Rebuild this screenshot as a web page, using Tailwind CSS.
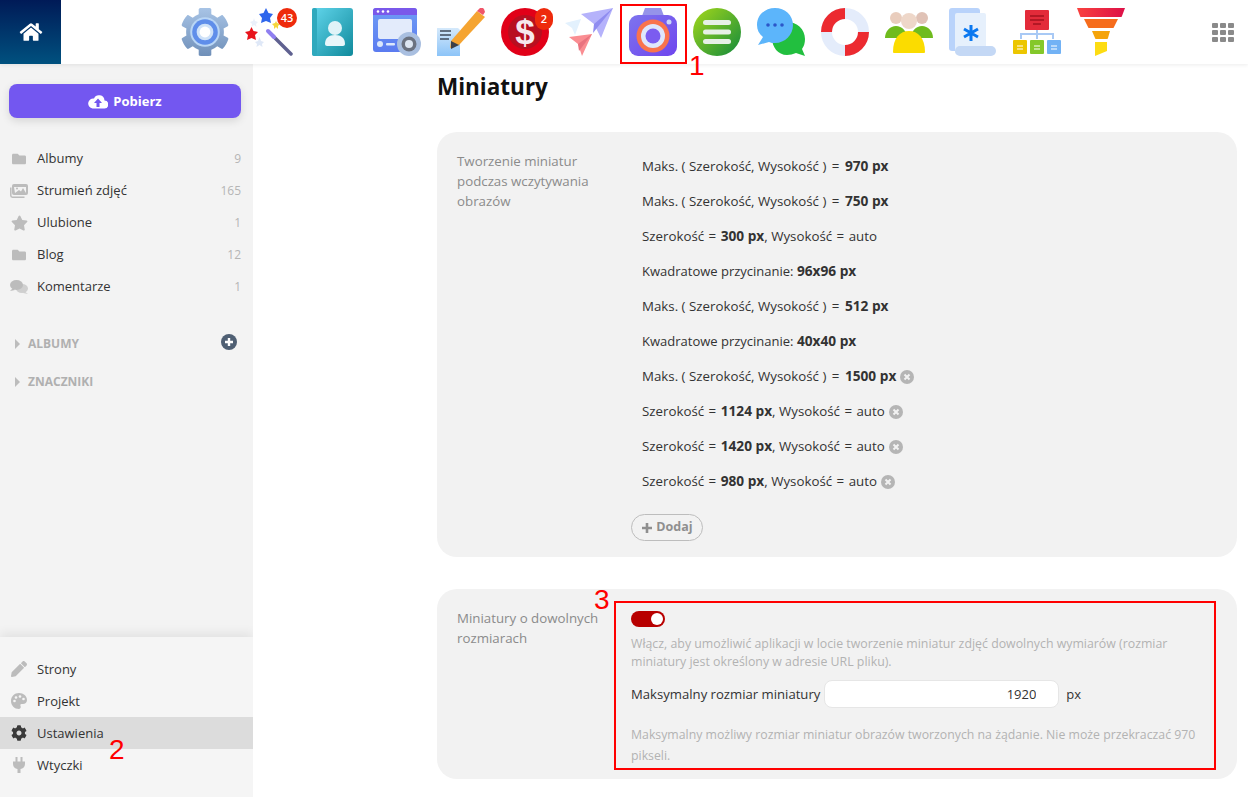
<!DOCTYPE html>
<html lang="pl">
<head>
    <meta charset="UTF-8">
    <title>Miniatury</title>
    <script src="https://cdn.jsdelivr.net/npm/@tailwindcss/browser@4"></script>
</head>
<body class="relative h-[797px] w-[1248px] overflow-hidden bg-white font-['Open_Sans',sans-serif] text-[13px] text-[#333]">

    <!-- top bar -->
    <header class="relative z-20 flex h-16 items-center bg-white shadow-[0_1px_4px_rgba(0,0,0,0.08)]">
        <a class="flex h-16 w-[61px] items-center justify-center bg-gradient-to-b from-[#001a57] to-[#00517f]">
            <svg class="h-[20px] w-[24px] fill-white" viewBox="0 0 576 512"><path d="M280.37 148.26L96 300.11V464a16 16 0 0 0 16 16l112.06-.29a16 16 0 0 0 15.92-16V368a16 16 0 0 1 16-16h64a16 16 0 0 1 16 16v95.64a16 16 0 0 0 16 16.05L464 480a16 16 0 0 0 16-16V300L295.67 148.26a12.19 12.19 0 0 0-15.3 0zM571.6 251.47L488 182.56V44.05a12 12 0 0 0-12-12h-56a12 12 0 0 0-12 12v72.61L318.47 43a48 48 0 0 0-61 0L4.34 251.47a12 12 0 0 0-1.6 16.9l25.5 31A12 12 0 0 0 45.15 301l235.22-193.74a12.19 12.19 0 0 1 15.3 0L530.9 301a12 12 0 0 0 16.9-1.6l25.5-31a12 12 0 0 0-1.7-16.93z"/></svg>
        </a>
        <nav class="ml-[120px] flex gap-4">
            <!-- settings -->
            <svg class="h-12 w-12" viewBox="16 12 480 488"><defs><linearGradient id="g1" x1="0" y1="0" x2="0" y2="1"><stop offset="0" stop-color="#a8c4e6"/><stop offset="1" stop-color="#6f8fb8"/></linearGradient></defs><path fill="url(#g1)" d="M487.4 315.7l-42.6-24.6c4.3-23.2 4.3-47 0-70.2l42.6-24.6c4.9-2.8 7.1-8.6 5.5-14-11.1-35.6-30-67.8-54.7-94.6-3.8-4.1-10-5.1-14.8-2.3L380.8 110c-17.9-15.4-38.5-27.3-60.8-35.1V25.8c0-5.6-3.9-10.5-9.4-11.7-36.7-8.2-74.3-7.8-109.2 0-5.5 1.2-9.4 6.1-9.4 11.7V75c-22.2 7.9-42.8 19.8-60.8 35.1L88.7 85.5c-4.9-2.8-11-1.9-14.8 2.3-24.7 26.7-43.6 58.9-54.7 94.6-1.7 5.4.6 11.2 5.5 14L67.3 221c-4.3 23.2-4.3 47 0 70.2l-42.6 24.6c-4.9 2.8-7.1 8.6-5.5 14 11.1 35.6 30 67.8 54.7 94.6 3.8 4.1 10 5.1 14.8 2.3l42.6-24.6c17.9 15.4 38.5 27.3 60.8 35.1v49.2c0 5.6 3.9 10.5 9.4 11.7 36.7 8.2 74.3 7.8 109.2 0 5.5-1.2 9.4-6.1 9.4-11.7v-49.2c22.2-7.9 42.8-19.8 60.8-35.1l42.6 24.6c4.9 2.8 11 1.9 14.8-2.3 24.7-26.7 43.6-58.9 54.7-94.6 1.5-5.5-.7-11.3-5.6-14.1z"/><circle cx="256" cy="256" r="150" fill="#b9d6f5"/><circle cx="256" cy="256" r="130" fill="#5f8eea"/><circle cx="256" cy="256" r="85" fill="#cfe2f8"/><circle cx="256" cy="256" r="55" fill="#fff"/></svg>
            <!-- wand -->
            <div class="relative h-12 w-12">
                <svg class="h-12 w-12" viewBox="0 0 48 48"><path d="M28 28l18 18" stroke="#5f6190" stroke-width="3.500" stroke-linecap="round"/><path d="M23 23l6 6" stroke="#8f7ff0" stroke-width="4" stroke-linecap="round"/><polygon fill="#2f66ec" points="21,0 23.500,5 28,6 25,10 26,15 21,13 16,15 17,10 14,6 18.500,5"/><polygon fill="#e8141c" points="6.500,19 8.500,23 13,24 10,27 11,32 6.500,30 2,32 3,27 0,24 4.500,23"/><polygon fill="#dfe8f7" points="14.500,29 16,33 19,34 17,36 17.500,39 14.500,37 11.500,39 12,36 10,34 13,33"/><polygon fill="#eaf0fa" points="9,10 10,13 13,14 11,16 11.500,19 9,17 6.500,19 7,16 5,14 8,13"/><polygon fill="#f5d63d" points="31,13 32,15 35,16 33,18 33,21 31,19 29,21 29,18 27,16 30,15"/></svg>
                <span class="absolute left-[32px] top-0 flex h-5 w-5 items-center justify-center rounded-full bg-[#ee2a0c] text-[11px] font-semibold text-white">43</span>
            </div>
            <!-- contacts -->
            <svg class="h-12 w-12" viewBox="0 0 48 48"><defs><linearGradient id="g3" x1="0" y1="0" x2="1" y2="1"><stop offset="0" stop-color="#62d6ec"/><stop offset="1" stop-color="#108a9c"/></linearGradient></defs><rect x="3" width="41" height="48" rx="3" fill="url(#g3)"/><rect x="3" width="5" height="48" rx="2" fill="#2fa9bd"/><circle cx="26" cy="20" r="7" fill="#dff3f8"/><path d="M16 36c0-6 4-9 10-9s10 3 10 9c0 1-1 2-2 2H18c-1 0-2-1-2-2z" fill="#e9f6fa"/></svg>
            <!-- browser settings -->
            <svg class="h-12 w-12" viewBox="0 0 48 48"><defs><linearGradient id="g4" x1="0" y1="0" x2="0" y2="1"><stop offset="0" stop-color="#6f9cf5"/><stop offset="1" stop-color="#5b7bf0"/></linearGradient></defs><rect y="0" width="44" height="44" rx="3" fill="url(#g4)"/><path d="M3 0h38a3 3 0 0 1 3 3v4H0V3a3 3 0 0 1 3-3z" fill="#7a58ea"/><circle cx="5" cy="3.500" r="1.300" fill="#fff"/><circle cx="10" cy="3.500" r="1.300" fill="#fff"/><circle cx="15" cy="3.500" r="1.300" fill="#fff"/><rect x="5" y="11" width="34" height="20" rx="2" fill="#e3ebfb"/><circle cx="7" cy="36" r="3" fill="#dbe7fb"/><rect x="13" y="35" width="9" height="2.500" rx="1" fill="#dbe7fb"/><circle cx="36" cy="36" r="12" fill="#a9bfe0"/><circle cx="36" cy="36" r="7.500" fill="#6b7280"/><circle cx="36" cy="36" r="4" fill="#dde6f2"/></svg>
            <!-- note pencil -->
            <svg class="h-12 w-12" viewBox="0 0 48 48"><defs><linearGradient id="g5" x1="0" y1="0" x2="0" y2="1"><stop offset="0" stop-color="#d5e9fb"/><stop offset="1" stop-color="#8cc4f8"/></linearGradient></defs><path d="M0 20h21l2 2v26H0z" fill="url(#g5)"/><path d="M3 23h11M3 27h11M3 31h9" stroke="#3f4a5a" stroke-width="1.600"/><path d="M14 33L40 3l8 6-26 28-9 3z" fill="#f5a431"/><path d="M40 3l3-3c2-1 3 0 4 1l1 3-2 3z" fill="#f0566a"/><path d="M14 33l8 4-8 4z" fill="#3a3f49"/></svg>
            <!-- dollar -->
            <div class="relative h-12 w-12">
                <svg class="h-12 w-12" viewBox="0 0 48 48"><circle cx="24" cy="24" r="24" fill="#e10018"/><circle cx="24" cy="24" r="17" fill="#b80f20"/><text x="24" y="36" text-anchor="middle" font-family="Liberation Sans" font-weight="700" font-size="35" fill="#f6e8ee">$</text></svg>
                <span class="absolute left-[34px] top-0 flex h-[22px] w-[18px] items-center justify-center rounded-full bg-[#ee2a0c] text-[11px] font-semibold text-white">2</span>
            </div>
            <!-- paper planes -->
            <svg class="h-12 w-12" viewBox="0 0 48 48"><polygon fill="#b5b2fb" points="16,6 48,0 36,30 29,16"/><polygon fill="#8f8cf0" points="29,16 48,0 28,25"/><polygon fill="#fa8d92" points="4,29 27,26 17,48 13,36"/><polygon fill="#e9737f" points="13,36 27,26 14,43"/><polygon fill="#e3f1fd" points="0,15 16,11 10,27 7,20"/></svg>
            <!-- camera -->
            <svg class="h-12 w-12" viewBox="0 0 48 48"><defs><linearGradient id="g8" x1="0" y1="0" x2="1" y2="1"><stop offset="0" stop-color="#7d74ee"/><stop offset="1" stop-color="#6f45ee"/></linearGradient></defs><path d="M16 0h16l3 8H13z" fill="#9593ea"/><rect y="7" width="48" height="41" rx="9" fill="url(#g8)"/><circle cx="24" cy="28" r="16.500" fill="#f9734d"/><circle cx="24" cy="28" r="12" fill="#dfe6fb"/><circle cx="24" cy="28" r="7.500" fill="#7b5cf0"/><circle cx="40" cy="14" r="2.500" fill="#c9d6fb"/></svg>
            <!-- menu circle -->
            <svg class="h-12 w-12" viewBox="0 0 48 48"><defs><linearGradient id="g9" x1="0" y1="0" x2="1" y2="1"><stop offset="0" stop-color="#a5d81a"/><stop offset="1" stop-color="#128a3c"/></linearGradient></defs><circle cx="24" cy="24" r="24" fill="url(#g9)"/><rect x="10" y="12" width="28" height="5" rx="2.500" fill="#e6f0e6"/><rect x="10" y="21.500" width="28" height="5" rx="2.500" fill="#e6f0e6"/><rect x="10" y="31" width="28" height="5" rx="2.500" fill="#e6f0e6"/></svg>
            <!-- chat -->
            <svg class="h-12 w-12" viewBox="0 0 48 48"><path d="M30 14c10 0 18 7 18 17 0 4-1 7-3 10l3 7-9-3c-3 1-6 2-9 2-9 0-15-8-15-17s6-16 15-16z" fill="#22bf3f"/><path d="M18 0c10 0 18 7 18 17s-8 18-18 18c-2 0-4 0-6-1l-11 3 5-8C2 26 0 22 0 17 0 7 8 0 18 0z" fill="#5cb5fb"/><circle cx="11" cy="17" r="1.800" fill="#2b57c9"/><circle cx="18" cy="17" r="1.800" fill="#2b57c9"/><circle cx="25" cy="17" r="1.800" fill="#2b57c9"/></svg>
            <!-- lifebuoy -->
            <svg class="h-12 w-12" viewBox="0 0 48 48"><circle cx="24" cy="24" r="18.500" fill="none" stroke="#e4ecfb" stroke-width="11"/><path d="M0 24A24 24 0 0 1 24 0L24 11A13 13 0 0 0 11 24z" fill="#ec2a30"/><path d="M48 24A24 24 0 0 1 24 48L24 37A13 13 0 0 0 37 24z" fill="#ec2a30"/></svg>
            <!-- group -->
            <svg class="h-12 w-12" viewBox="0 0 48 48"><circle cx="11" cy="10" r="6" fill="#e9cdbd"/><circle cx="37" cy="10" r="6" fill="#e0c2b6"/><path d="M0 30c0-7 5-12 11-12s11 5 11 12z" fill="#6fbb1e"/><path d="M26 30c0-7 5-12 11-12s11 5 11 12z" fill="#6fbb1e"/><circle cx="24" cy="13" r="8" fill="#eed7c9"/><path d="M8 44c0-14 7-21 16-21s16 7 16 21c0 1-1 1-2 1H10c-1 0-2 0-2-1z" fill="#fbdc00"/></svg>
            <!-- document asterisk -->
            <svg class="h-12 w-12" viewBox="0 0 48 48"><rect x="0" y="0" width="31" height="43" rx="3" fill="#b9d3fb"/><rect x="6" y="5" width="31" height="41" rx="2" fill="#e6f0fc"/><rect x="6" y="38" width="41" height="10" rx="5" fill="#c4d8f5"/><path d="M22 17v16M15 21l14 8M29 21l-14 8" stroke="#0b78f0" stroke-width="3"/></svg>
            <!-- hierarchy -->
            <svg class="h-12 w-12" viewBox="0 0 48 48"><rect x="12" y="2" width="24" height="20" rx="1" fill="#e32b3a"/><path d="M17 8h14M17 12h14M20 16h8" stroke="#a4131f" stroke-width="1.600"/><path d="M24 22v9M8 31v-5h32v5" fill="none" stroke="#a8c9f5" stroke-width="2"/><rect y="32" width="14" height="14" rx="1" fill="#ecc600"/><rect x="17" y="32" width="14" height="14" rx="1" fill="#84c82a"/><rect x="34" y="32" width="14" height="14" rx="1" fill="#72b2f5"/><path d="M4 38h6M4 41h6M21 38h6M21 41h6M38 38h6M38 41h6" stroke="#fff" stroke-width="1.200"/></svg>
            <!-- funnel -->
            <svg class="h-12 w-12" viewBox="0 0 48 48"><defs><linearGradient id="g15" x1="0" y1="0" x2="1" y2="0"><stop offset="0" stop-color="#f9423e"/><stop offset="1" stop-color="#dd1048"/></linearGradient></defs><path d="M0 0h48l-3 8a1 1 0 0 1-1 1H4a1 1 0 0 1-1-1z" fill="url(#g15)"/><path d="M7 11h34l-4 8a1 1 0 0 1-1 1H12a1 1 0 0 1-1-1z" fill="#f66c1c"/><path d="M15 23h18l-2 7a1 1 0 0 1-1 1H19a1 1 0 0 1-1-1z" fill="#f5a40a"/><path d="M18 34h12v9l-12 5z" fill="#fddc12"/></svg>
        </nav>
        <svg class="ml-auto mr-[14px] h-[19px] w-[22px] fill-[#8a8a8a]" viewBox="0 0 22 19"><rect width="6" height="5" rx="1"/><rect x="8" width="6" height="5" rx="1"/><rect x="16" width="6" height="5" rx="1"/><rect y="7" width="6" height="5" rx="1"/><rect x="8" y="7" width="6" height="5" rx="1"/><rect x="16" y="7" width="6" height="5" rx="1"/><rect y="14" width="6" height="5" rx="1"/><rect x="8" y="14" width="6" height="5" rx="1"/><rect x="16" y="14" width="6" height="5" rx="1"/></svg>
    </header>

    <div class="flex h-[733px]">
        <!-- sidebar -->
        <aside class="flex w-[253px] shrink-0 flex-col justify-between overflow-hidden bg-[#f3f3f3]">
            <div class="pt-5">
                <div class="pb-[25px] pl-[9px] pr-3">
                    <button class="flex h-[34px] w-full items-center justify-center gap-[5px] rounded-lg bg-[#7357f0] font-bold text-white shadow-[0_3px_8px_rgba(0,0,0,0.12)]">
                        <svg class="h-[15px] w-[20px]" viewBox="0 0 20 15"><path fill="#fff" d="M16.500 6.500A5.500 5.500 0 0 0 6 4.500 4.500 4.500 0 0 0 4.500 14.500H16a4 4 0 0 0 .5-8z"/><path fill="#7357f0" d="M10 4.500l4 4.500h-2.500v4h-3V9H6z"/></svg>
                        <span class="pt-[2px]">Pobierz</span>
                    </button>
                </div>
                <ul>
                    <li class="flex h-8 items-center pl-[11px] pr-3">
                        <svg class="h-[14px] w-[16px] fill-[#bcbcbc]" viewBox="0 0 512 512"><path d="M464 128H272l-64-64H48C21.490 64 0 85.490 0 112v288c0 26.510 21.490 48 48 48h416c26.510 0 48-21.490 48-48V176c0-26.510-21.490-48-48-48z"/></svg>
                        <span class="ml-[10px]">Albumy</span><span class="ml-auto text-[12px] text-[#b5b5b5]">9</span>
                    </li>
                    <li class="flex h-8 items-center pl-[10px] pr-3">
                        <svg class="h-[14px] w-[18px]" viewBox="0 0 18 14"><path fill="#bcbcbc" d="M4 0h12a2 2 0 0 1 2 2v7a2 2 0 0 1-2 2H4a2 2 0 0 1-2-2V2a2 2 0 0 1 2-2z"/><path fill="#f3f3f3" d="M4 3h12v6H5z"/><circle cx="7" cy="4.500" r="1" fill="#bcbcbc"/><path fill="#bcbcbc" d="M5 9l4-3 2 1.500L13 4l3 5z"/><path fill="none" stroke="#bcbcbc" stroke-width="1.500" d="M.8 3.500v8c0 1 .7 1.700 1.700 1.700h12"/></svg>
                        <span class="ml-[9px]">Strumień zdjęć</span><span class="ml-auto text-[12px] text-[#b5b5b5]">165</span>
                    </li>
                    <li class="flex h-8 items-center pl-[11px] pr-3">
                        <svg class="h-[16px] w-[17px] fill-[#bcbcbc]" viewBox="0 0 576 512"><path d="M259.300 17.800L194 150.200 47.900 171.500c-26.200 3.800-36.700 36.100-17.700 54.600l105.700 103-25 145.500c-4.500 26.300 23.200 46 46.400 33.700L288 439.600l130.700 68.700c23.200 12.200 50.900-7.400 46.400-33.700l-25-145.500 105.700-103c19-18.500 8.500-50.800-17.700-54.600L382 150.200 316.700 17.800c-11.700-23.600-45.600-23.900-57.400 0z"/></svg>
                        <span class="ml-[9px]">Ulubione</span><span class="ml-auto text-[12px] text-[#b5b5b5]">1</span>
                    </li>
                    <li class="flex h-8 items-center pl-[11px] pr-3">
                        <svg class="h-[14px] w-[16px] fill-[#bcbcbc]" viewBox="0 0 512 512"><path d="M464 128H272l-64-64H48C21.490 64 0 85.490 0 112v288c0 26.510 21.490 48 48 48h416c26.510 0 48-21.490 48-48V176c0-26.510-21.490-48-48-48z"/></svg>
                        <span class="ml-[10px]">Blog</span><span class="ml-auto text-[12px] text-[#b5b5b5]">12</span>
                    </li>
                    <li class="flex h-8 items-center pl-[10px] pr-3">
                        <svg class="h-[14px] w-[18px]" viewBox="0 0 18 14"><ellipse cx="12" cy="8.500" rx="6" ry="4.500" fill="#cfcfcf"/><path fill="#cfcfcf" d="M14 11l4 3-5-1z"/><ellipse cx="6.500" cy="5" rx="6.500" ry="5" fill="#bcbcbc"/><path fill="#bcbcbc" d="M3 8l-3 3 5-1z"/></svg>
                        <span class="ml-[9px]">Komentarze</span><span class="ml-auto text-[12px] text-[#b5b5b5]">1</span>
                    </li>
                </ul>
                <div class="mt-[29px] flex h-[24px] items-center pl-[15px] pr-[16px] font-bold text-[12px] text-[#b0b0b0]">
                    <svg class="h-[10px] w-[5px] fill-[#bcbcbc]" viewBox="0 0 5 10"><path d="M0 0l5 5-5 5z"/></svg>
                    <span class="ml-[8px]">ALBUMY</span>
                    <svg class="ml-auto mb-1 h-4 w-4" viewBox="0 0 16 16"><circle cx="8" cy="8" r="8" fill="#4f5f73"/><path d="M8 4v8M4 8h8" stroke="#fff" stroke-width="2.400"/></svg>
                </div>
                <div class="mt-[14px] flex h-[24px] items-center pl-[15px] font-bold text-[12px] text-[#b0b0b0]">
                    <svg class="h-[10px] w-[5px] fill-[#bcbcbc]" viewBox="0 0 5 10"><path d="M0 0l5 5-5 5z"/></svg>
                    <span class="ml-[8px]">ZNACZNIKI</span>
                </div>
            </div>
            <ul class="bg-[#f5f5f5] pb-4 pt-4 shadow-[0_-4px_10px_rgba(0,0,0,0.07)]">
                <li class="flex h-8 items-center pl-[11px]">
                    <svg class="h-[16px] w-[16px] fill-[#bcbcbc]" viewBox="0 0 512 512"><path d="M497.900 142.100l-46.100 46.100c-4.700 4.700-12.300 4.700-17 0l-111-111c-4.700-4.700-4.700-12.300 0-17l46.100-46.100c18.700-18.700 49.100-18.700 67.900 0l60.100 60.100c18.800 18.700 18.800 49.100 0 67.900zM284.200 99.800L21.600 362.400.4 483.900c-2.900 16.400 11.400 30.600 27.800 27.800l121.500-21.300 262.600-262.600c4.700-4.700 4.700-12.300 0-17l-111-111c-4.800-4.700-12.400-4.700-17.100 0z"/></svg>
                    <span class="ml-[10px] pt-[2px]">Strony</span>
                </li>
                <li class="flex h-8 items-center pl-[11px]">
                    <svg class="h-[16px] w-[16px]" viewBox="0 0 16 16"><path fill="#bcbcbc" d="M8 0c4.500 0 8 3 8 7 0 2.500-2 4-4 4h-1.500c-1 0-1.500 1-1 1.800.5 1 .3 3.200-1.500 3.200C3.500 16 0 12.500 0 8s3.500-8 8-8z"/><circle cx="3.500" cy="8" r="1.300" fill="#f5f5f5"/><circle cx="5" cy="4.500" r="1.300" fill="#f5f5f5"/><circle cx="9" cy="3.500" r="1.300" fill="#f5f5f5"/><circle cx="12.500" cy="6" r="1.300" fill="#f5f5f5"/></svg>
                    <span class="ml-[10px] pt-[2px]">Projekt</span>
                </li>
                <li class="flex h-8 items-center bg-[#dcdcdc] pl-[11px]">
                    <svg class="h-[16px] w-[16px] fill-[#3a3a3a]" viewBox="0 0 512 512"><path d="M487.400 315.700l-42.600-24.600c4.300-23.200 4.300-47 0-70.200l42.600-24.600c4.900-2.800 7.100-8.600 5.500-14-11.100-35.600-30-67.800-54.700-94.600-3.800-4.100-10-5.100-14.800-2.300L380.800 110c-17.900-15.400-38.500-27.300-60.800-35.100V25.800c0-5.600-3.900-10.500-9.400-11.700-36.700-8.200-74.300-7.800-109.200 0-5.500 1.200-9.400 6.100-9.400 11.700V75c-22.200 7.900-42.800 19.800-60.800 35.100L88.700 85.500c-4.900-2.800-11-1.900-14.800 2.300-24.700 26.700-43.600 58.900-54.700 94.600-1.700 5.400.6 11.200 5.500 14L67.300 221c-4.300 23.200-4.300 47 0 70.200l-42.600 24.600c-4.900 2.800-7.100 8.600-5.500 14 11.100 35.600 30 67.800 54.700 94.600 3.800 4.100 10 5.100 14.800 2.300l42.600-24.600c17.900 15.400 38.500 27.300 60.800 35.100v49.200c0 5.600 3.900 10.500 9.400 11.700 36.700 8.200 74.300 7.800 109.200 0 5.500-1.200 9.400-6.100 9.400-11.700v-49.200c22.200-7.900 42.800-19.800 60.800-35.100l42.600 24.600c4.900 2.800 11 1.900 14.800-2.300 24.700-26.700 43.600-58.900 54.700-94.600 1.500-5.500-.7-11.300-5.600-14.100zM256 336c-44.100 0-80-35.900-80-80s35.900-80 80-80 80 35.900 80 80-35.900 80-80 80z"/></svg>
                    <span class="ml-[10px] pt-[2px]">Ustawienia</span>
                </li>
                <li class="flex h-8 items-center pl-[13px]">
                    <svg class="h-[16px] w-[12px] fill-[#bcbcbc]" viewBox="0 0 12 16"><rect x="2.500" width="2" height="5"/><rect x="7.500" width="2" height="5"/><path d="M0 4.500h12V7c0 3-2 4.500-4.500 5v4h-3v-4C2 11.500 0 10 0 7z"/></svg>
                    <span class="ml-[12px] pt-[2px]">Wtyczki</span>
                </li>
            </ul>
        </aside>

        <!-- main -->
        <main class="min-w-0 flex-1 pl-[184px] pr-[11px]">
            <h1 class="flex h-[46px] items-center text-[22.500px] font-bold text-[#111]">Miniatury</h1>

            <section class="mt-[22px] flex h-[425px] rounded-[20px] bg-[#f2f2f2] pl-5 pt-[19px]">
                <div class="w-[174px] shrink-0 text-[13.300px] leading-5 text-[#8b8b8b]">Tworzenie miniatur<br>podczas wczytywania<br>obrazów</div>
                <div class="flex-1">
                    <div class="-mt-[2px] ml-[11px]">
                        <p class="flex h-[35px] items-center text-[13.300px]"><span>Maks. ( Szerokość, Wysokość ) <i class="mx-[2px] not-italic">=</i> <b class="text-[13.700px]">970 px</b></span></p>
                        <p class="flex h-[35px] items-center text-[13.300px]"><span>Maks. ( Szerokość, Wysokość ) <i class="mx-[2px] not-italic">=</i> <b class="text-[13.700px]">750 px</b></span></p>
                        <p class="flex h-[35px] items-center text-[13.300px]"><span>Szerokość <i class="mx-px not-italic">=</i> <b class="text-[13.700px]">300 px</b>, Wysokość <i class="mx-px not-italic">=</i> auto</span></p>
                        <p class="flex h-[35px] items-center"><span>Kwadratowe przycinanie: <b class="text-[13.700px]">96x96 px</b></span></p>
                        <p class="flex h-[35px] items-center text-[13.300px]"><span>Maks. ( Szerokość, Wysokość ) <i class="mx-[2px] not-italic">=</i> <b class="text-[13.700px]">512 px</b></span></p>
                        <p class="flex h-[35px] items-center"><span>Kwadratowe przycinanie: <b class="text-[13.700px]">40x40 px</b></span></p>
                        <p class="flex h-[35px] items-center gap-1 text-[13.300px]"><span>Maks. ( Szerokość, Wysokość ) <i class="mx-[2px] not-italic">=</i> <b class="text-[13.700px]">1500 px</b></span><svg class="h-[14px] w-[14px]" viewBox="0 0 14 14"><circle cx="7" cy="7" r="7" fill="#b5b5b5"/><path d="M4.500 4.500l5 5M9.500 4.500l-5 5" stroke="#f2f2f2" stroke-width="2"/></svg></p>
                        <p class="flex h-[35px] items-center gap-1 text-[13.300px]"><span>Szerokość <i class="mx-px not-italic">=</i> <b class="text-[13.700px]">1124 px</b>, Wysokość <i class="mx-px not-italic">=</i> auto</span><svg class="h-[14px] w-[14px]" viewBox="0 0 14 14"><circle cx="7" cy="7" r="7" fill="#b5b5b5"/><path d="M4.500 4.500l5 5M9.500 4.500l-5 5" stroke="#f2f2f2" stroke-width="2"/></svg></p>
                        <p class="flex h-[35px] items-center gap-1 text-[13.300px]"><span>Szerokość <i class="mx-px not-italic">=</i> <b class="text-[13.700px]">1420 px</b>, Wysokość <i class="mx-px not-italic">=</i> auto</span><svg class="h-[14px] w-[14px]" viewBox="0 0 14 14"><circle cx="7" cy="7" r="7" fill="#b5b5b5"/><path d="M4.500 4.500l5 5M9.500 4.500l-5 5" stroke="#f2f2f2" stroke-width="2"/></svg></p>
                        <p class="flex h-[35px] items-center gap-1 text-[13.300px]"><span>Szerokość <i class="mx-px not-italic">=</i> <b class="text-[13.700px]">980 px</b>, Wysokość <i class="mx-px not-italic">=</i> auto</span><svg class="h-[14px] w-[14px]" viewBox="0 0 14 14"><circle cx="7" cy="7" r="7" fill="#b5b5b5"/><path d="M4.500 4.500l5 5M9.500 4.500l-5 5" stroke="#f2f2f2" stroke-width="2"/></svg></p>
                    </div>
                    <button class="mt-[15px] flex h-[27px] w-[72px] items-center justify-center gap-[3px] rounded-full border border-[#bdbdbd] text-[12.500px] font-bold text-[#8f8f8f]">
                        <svg class="h-3 w-3" viewBox="0 0 12 12"><path d="M6 1v10M1 6h10" stroke="#8f8f8f" stroke-width="2.600"/></svg>Dodaj
                    </button>
                </div>
            </section>

            <section class="mt-8 flex h-[190px] rounded-[20px] bg-[#f2f2f2] pl-5 pt-[19px]">
                <div class="w-[174px] shrink-0 text-[13.300px] leading-5 text-[#8b8b8b]">Miniatury o dowolnych rozmiarach</div>
                <div class="flex-1 pr-[30px]">
                    <span class="mt-[3px] flex h-4 w-[34px] items-center justify-end rounded-full bg-[#b80000] pr-[2px]"><span class="h-3 w-3 rounded-full bg-white"></span></span>
                    <p class="mt-[8px] text-[12.350px] leading-[18px] text-[#b3b3b3]">Włącz, aby umożliwić aplikacji w locie tworzenie miniatur zdjęć dowolnych wymiarów (rozmiar miniatury jest określony w adresie URL pliku).</p>
                    <div class="mt-[9px] flex h-7 items-center">
                        <span class="pt-[2px] text-[13.140px]">Maksymalny rozmiar miniatury</span>
                        <input class="ml-[4px] h-7 w-[235px] rounded-lg border border-[#e6e6e6] bg-white pr-[22px] text-right text-[#333] outline-none" value="1920">
                        <span class="ml-[7px] pt-[2px]">px</span>
                    </div>
                    <p class="mt-[16px] text-[12.300px] leading-[21px] text-[#b3b3b3]">Maksymalny możliwy rozmiar miniatur obrazów tworzonych na żądanie. Nie może przekraczać 970 pikseli.</p>
                </div>
            </section>
        </main>
    </div>

    <!-- red annotations drawn over the screenshot -->
    <div class="absolute left-[620px] top-[4px] z-30 h-[60px] w-[67px] border-2 border-[#f00]"></div>
    <div class="absolute left-[614px] top-[601px] z-30 h-[169px] w-[602px] border-2 border-[#f00]"></div>
    <span class="absolute left-[689px] top-[49px] z-30 font-['Liberation_Sans',sans-serif] text-[28px] leading-[34px] text-[#f00]">1</span>
    <span class="absolute left-[109px] top-[733px] z-30 font-['Liberation_Sans',sans-serif] text-[28px] leading-[34px] text-[#f00]">2</span>
    <span class="absolute left-[594px] top-[583px] z-30 font-['Liberation_Sans',sans-serif] text-[28px] leading-[34px] text-[#f00]">3</span>
</body>
</html>
